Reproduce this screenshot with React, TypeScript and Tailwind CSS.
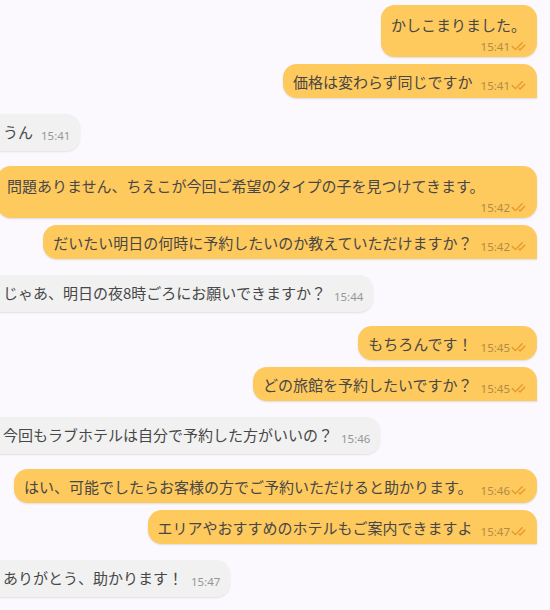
import { CheckCheck } from "lucide-react";

type Msg = {
  side: "in" | "out";
  text: string;
  time: string;
  stack?: boolean;
  full?: boolean;
  tail?: boolean;
  gap: number;
};

const messages: Msg[] = [
  { side: "out", text: "かしこまりました。", time: "15:41", stack: true, gap: 0 },
  { side: "out", text: "価格は変わらず同じですか", time: "15:41", tail: true, gap: 7 },
  { side: "in", text: "うん", time: "15:41", gap: 16 },
  { side: "out", text: "問題ありません、ちえこが今回ご希望のタイプの子を見つけてきます。", time: "15:42", stack: true, full: true, gap: 15 },
  { side: "out", text: "だいたい明日の何時に予約したいのか教えていただけますか？", time: "15:42", tail: true, gap: 7 },
  { side: "in", text: "じゃあ、明日の夜8時ごろにお願いできますか？", time: "15:44", gap: 16 },
  { side: "out", text: "もちろんです！", time: "15:45", gap: 14 },
  { side: "out", text: "どの旅館を予約したいですか？", time: "15:45", tail: true, gap: 7 },
  { side: "in", text: "今回もラブホテルは自分で予約した方がいいの？", time: "15:46", gap: 16 },
  { side: "out", text: "はい、可能でしたらお客様の方でご予約いただけると助かります。", time: "15:46", gap: 15 },
  { side: "out", text: "エリアやおすすめのホテルもご案内できますよ", time: "15:47", tail: true, gap: 7 },
  { side: "in", text: "ありがとう、助かります！", time: "15:47", gap: 16 },
];

const gapClass: Record<number, string> = {
  0: "mt-0",
  7: "mt-[7px]",
  14: "mt-[14px]",
  15: "mt-[15px]",
  16: "mt-[16px]",
};

function Stamp({ time, out }: { time: string; out: boolean }) {
  return (
    <span className="flex items-center shrink-0 leading-[14px]">
      <span
        className={`text-[11.5px] leading-[14px] ${out ? "text-[#b08c44]" : "text-[#969696]"}`}
        style={{ fontFamily: '"Noto Sans", "Open Sans", sans-serif' }}
      >
        {time}
      </span>
      {out && <CheckCheck size={15} strokeWidth={2.2} className="ml-px text-[#e8972a]" />}
    </span>
  );
}

function Bubble({ m }: { m: Msg }) {
  const out = m.side === "out";
  if (out && m.stack) {
    return (
      <div
        className={`${gapClass[m.gap]} ${m.full ? "self-stretch" : "self-end"} flex flex-col rounded-[14px] bg-[#fec95d] pl-[10px] pr-[11px] pt-[8px] pb-[3px] shadow-[0_1px_2px_rgba(0,0,0,0.12)]`}
      >
        <p className="text-[15px] leading-[23px] text-[#474747]">{m.text}</p>
        <div className="mt-[3px] flex justify-end">
          <Stamp time={m.time} out />
        </div>
      </div>
    );
  }
  if (out) {
    return (
      <div
        className={`${gapClass[m.gap]} self-end flex items-end rounded-[14px] ${m.tail ? "rounded-br-none" : ""} bg-[#fec95d] pl-[10px] pr-[11px] pt-[7px] pb-[5px] shadow-[0_1px_2px_rgba(0,0,0,0.12)]`}
      >
        <p className="text-[15px] leading-[22px] text-[#474747] whitespace-nowrap">{m.text}</p>
        <span className="ml-[8px]">
          <Stamp time={m.time} out />
        </span>
      </div>
    );
  }
  return (
    <div
      className={`${gapClass[m.gap]} self-start ml-[-9px] flex items-end rounded-[14px] rounded-bl-none bg-[#f1f1f1] pl-[15px] pr-[10px] pt-[6px] pb-[8px] shadow-[0_1px_2px_rgba(0,0,0,0.1)]`}
    >
      <p className="text-[15px] leading-[23px] text-[#474747] whitespace-nowrap">{m.text}</p>
      <span className="ml-[8px]">
        <Stamp time={m.time} out={false} />
      </span>
    </div>
  );
}

export default function App() {
  return (
    <div
      className="w-[550px] h-[610px] overflow-hidden bg-[#fbf9fd]"
      style={{ fontFamily: '"Noto Sans CJK JP", "Noto Sans", sans-serif' }}
    >
      <div className="ml-[-3px] mr-[13px] pt-[5px] flex flex-col">
        {messages.map((m, i) => (
          <Bubble key={i} m={m} />
        ))}
      </div>
    </div>
  );
}
